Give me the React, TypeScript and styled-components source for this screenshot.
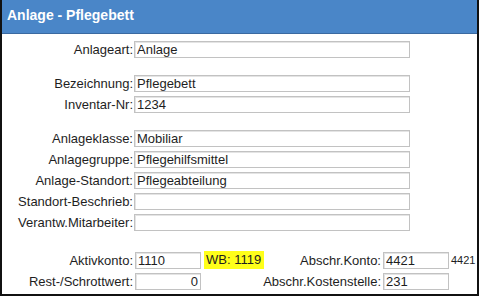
import styled, { createGlobalStyle } from "styled-components";

const Global = createGlobalStyle`
  html, body {
    margin: 0;
    padding: 0;
    background: #ffffff;
  }
`;

type Row = { label: string; value: string };

const groups: Row[][] = [
  [{ label: "Anlageart:", value: "Anlage" }],
  [
    { label: "Bezeichnung:", value: "Pflegebett" },
    { label: "Inventar-Nr:", value: "1234" },
  ],
  [
    { label: "Anlageklasse:", value: "Mobiliar" },
    { label: "Anlagegruppe:", value: "Pflegehilfsmittel" },
    { label: "Anlage-Standort:", value: "Pflegeabteilung" },
    { label: "Standort-Beschrieb:", value: "" },
    { label: "Verantw.Mitarbeiter:", value: "" },
  ],
];

function App() {
  return (
    <>
      <Global />
      <Window>
        <Header>Anlage - Pflegebett</Header>
        <Body>
          {groups.map((group, gi) => (
            <Group key={gi}>
              {group.map((row) => (
                <FieldRow key={row.label}>
                  <Label>{row.label}</Label>
                  <Field readOnly value={row.value} />
                </FieldRow>
              ))}
            </Group>
          ))}
          <Accounts>
            <Label>Aktivkonto:</Label>
            <SmallField readOnly value="1110" />
            <Middle>
              <Marker>WB: 1119</Marker>
              <Label>Abschr.Konto:</Label>
            </Middle>
            <SmallField readOnly value="4421" />
            <Extra>4421</Extra>

            <Label>Rest-/Schrottwert:</Label>
            <SmallField readOnly value="0" $right />
            <Middle>
              <span />
              <Label>Abschr.Kostenstelle:</Label>
            </Middle>
            <SmallField readOnly value="231" />
            <span />
          </Accounts>
        </Body>
      </Window>
    </>
  );
}

const Window = styled.div`
  width: 479px;
  height: 296px;
  box-sizing: border-box;
  border-left: 2px solid #111;
  border-right: 2px solid #111;
  border-bottom: 2px solid #111;
  background: #ffffff;
  font-family: "Liberation Sans", Arial, sans-serif;
  overflow: hidden;
`;

const Header = styled.div`
  height: 34px;
  box-sizing: border-box;
  display: flex;
  align-items: center;
  padding: 0 0 3px 5px;
  background: #4a86c8;
  border-bottom: 1px solid #3a69a0;
  color: #ffffff;
  font-weight: bold;
  font-size: 14px;
`;

const Body = styled.div`
  display: flex;
  flex-direction: column;
  gap: 17px;
  padding-top: 7px;
`;

const Group = styled.div`
  display: flex;
  flex-direction: column;
  gap: 4px;
`;

const FieldRow = styled.div`
  display: grid;
  grid-template-columns: 131px 276px;
  column-gap: 1px;
  align-items: center;
`;

const Label = styled.span`
  text-align: right;
  font-size: 13px;
  color: #1e1e1e;
  white-space: nowrap;
`;

const Field = styled.input<{ $right?: boolean }>`
  box-sizing: border-box;
  height: 17px;
  width: 100%;
  margin: 0;
  padding: 0 2px;
  border: 1px solid #c2c2c2;
  box-shadow: inset 1px 1px 0 #e4e4e4;
  background: #ffffff;
  font-family: "Liberation Sans", Arial, sans-serif;
  font-size: 13px;
  color: #1e1e1e;
  text-align: ${(p) => (p.$right ? "right" : "left")};
  outline: none;
`;

const SmallField = styled(Field)`
  width: 66px;
`;

const Accounts = styled.div`
  display: grid;
  grid-template-columns: 131px 66px 178px 66px auto;
  column-gap: 2px;
  row-gap: 4px;
  align-items: center;
  margin-top: 3px;
`;

const Middle = styled.div`
  display: flex;
  justify-content: space-between;
  align-items: center;
`;

const Marker = styled.span`
  background: #ffff1a;
  font-size: 13px;
  color: #1e1e1e;
  padding: 1px 3px 2px 2px;
  margin-left: 1px;
`;

const Extra = styled.span`
  font-size: 11px;
  color: #1e1e1e;
`;

export default App;
